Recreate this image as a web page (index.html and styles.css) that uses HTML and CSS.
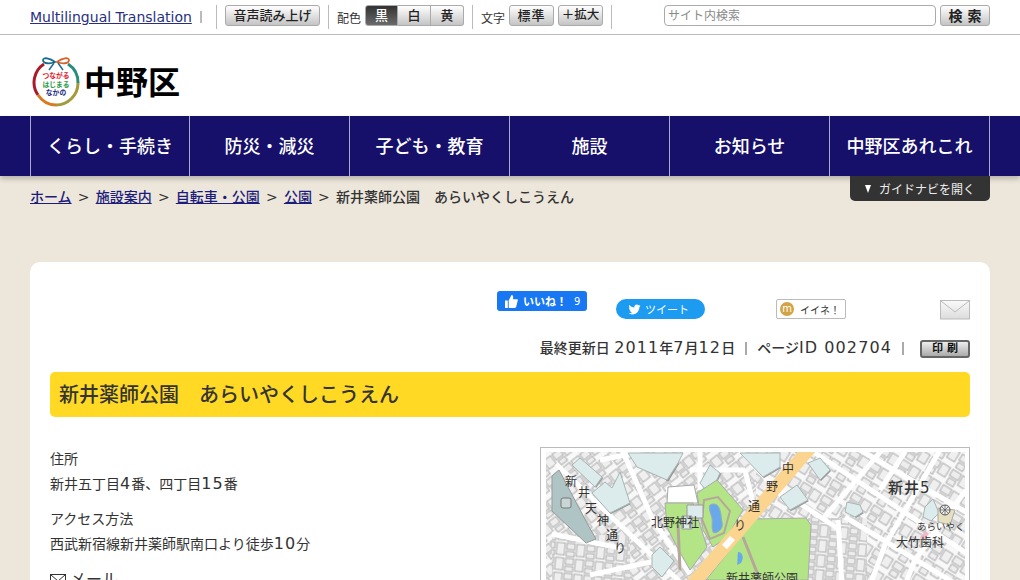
FILE: index.html
```html
<!DOCTYPE html>
<html lang="ja">
<head>
<meta charset="utf-8">
<title>新井薬師公園 中野区</title>
<link rel="stylesheet" href="styles.css">
</head>
<body>
<div class="topbar">
  <a class="lang" href="#">Multilingual Translation</a><span class="lang-sep"></span>
  <div class="tool tool-voice"><button class="btn btn-voice">音声読み上げ</button></div>
  <div class="tool tool-color"><span class="tool-label">配色</span>
    <div class="seg"><button class="seg-b on">黒</button><button class="seg-b">白</button><button class="seg-b">黄</button></div>
  </div>
  <div class="tool tool-size"><span class="tool-label">文字</span>
    <button class="btn btn-std">標準</button><button class="btn btn-big">＋拡大</button>
  </div>
  <div class="search"><input class="search-input" placeholder="サイト内検索"><button class="btn btn-search">検 索</button></div>
</div>
<header class="brand">
  <svg class="logo-mark" viewBox="0 0 48 50" width="48" height="50">
    <path d="M6 38A22 22 0 0 1 12 7" fill="none" stroke="#a81c2a" stroke-width="3"/>
    <path d="M6 38A22 22 0 0 0 24 48" fill="none" stroke="#d97a1e" stroke-width="3"/>
    <path d="M24 48A22 22 0 0 0 46 26" fill="none" stroke="#a59a3a" stroke-width="3"/>
    <path d="M46 26A22 22 0 0 0 36 7" fill="none" stroke="#2c8c7c" stroke-width="3"/>
    <path d="M23 5C18 1 11 0 11 3C11 7 18 7 23 5Z" fill="#fff" stroke="#156b8c" stroke-width="1.800"/>
    <path d="M25 5C30 1 37 0 37 3C37 7 30 7 25 5Z" fill="#fff" stroke="#d9612a" stroke-width="1.800"/>
    <path d="M22 6l-5 7M26 6l5 7" fill="none" stroke="#1d6f8c" stroke-width="1.500"/>
    <text class="logo-l" x="24" y="21" fill="#e0182d">つながる</text>
    <text class="logo-l" x="24" y="29.500" fill="#1f9a45">はじまる</text>
    <text class="logo-l" x="24" y="38" fill="#1b2a83">なかの</text>
  </svg>
  <span class="brand-name">中野区</span>
</header>
<nav class="gnav">
  <a class="gnav-i" href="#">くらし・手続き</a>
  <a class="gnav-i" href="#">防災・減災</a>
  <a class="gnav-i" href="#">子ども・教育</a>
  <a class="gnav-i" href="#">施設</a>
  <a class="gnav-i" href="#">お知らせ</a>
  <a class="gnav-i" href="#">中野区あれこれ</a>
</nav>
<div class="below-nav">
  <a class="guide" href="#"><span class="guide-arrow"></span>ガイドナビを開く</a>
  <div class="crumbs">
    <a href="#">ホーム</a><span class="crumb-sep">&gt;</span><a href="#">施設案内</a><span class="crumb-sep">&gt;</span><a href="#">自転車・公園</a><span class="crumb-sep">&gt;</span><a href="#">公園</a><span class="crumb-sep">&gt;</span><span>新井薬師公園　あらいやくしこうえん</span>
  </div>
</div>
<main class="card">
  <div class="share">
    <a class="fb" href="#"><svg viewBox="0 0 14 14" width="13" height="13"><path d="M0 6h3v8H0zM4 6l3-6c2 0 2 2 1.600 4.500H13c1 0 1 1.500.6 2L12 13c-.3.700-1 1-1.500 1H4z" fill="#fff"/></svg><b>いいね！</b><span class="fb-n">9</span></a>
    <a class="tw" href="#"><svg viewBox="0 0 24 24" width="13" height="13"><path d="M23 5c-.8.4-1.700.6-2.600.7.900-.6 1.600-1.400 2-2.500-.9.500-1.800.9-2.900 1.100a4.600 4.600 0 0 0-7.800 4.200C7.900 8.300 4.500 6.500 2.300 3.700c-1.200 2-.6 4.700 1.400 6.100-.7 0-1.400-.2-2-.6 0 2.200 1.500 4.100 3.700 4.600-.7.200-1.400.2-2.100.1.600 1.800 2.300 3.200 4.300 3.200A9.300 9.300 0 0 1 1 19c2 1.300 4.500 2 7 2 8.500 0 13.300-7.200 13-13.600.9-.6 1.600-1.400 2-2.400z" fill="#fff"/></svg>ツイート</a>
    <a class="mx" href="#"><span class="mx-ic">m</span>イイネ！</a>
    <a class="mail-ic" href="#"><svg viewBox="0 0 30 20" width="30" height="20"><defs><linearGradient id="mg" x1="0" y1="0" x2="0" y2="1"><stop offset="0" stop-color="#fafafa"/><stop offset="1" stop-color="#dcdcdc"/></linearGradient></defs><rect x=".5" y=".5" width="29" height="18.500" fill="url(#mg)" stroke="#bbb"/><path d="M1 1l14 11L29 1" fill="none" stroke="#bbb"/></svg></a>
  </div>
  <div class="meta">
    <span>最終更新日 <span class="num">2011</span>年<span class="num">7</span>月<span class="num">12</span>日</span><i class="meta-sep"></i><span>ページ<span class="num">ID 002704</span></span><i class="meta-sep"></i><button class="print">印 刷</button>
  </div>
  <h1 class="title">新井薬師公園　あらいやくしこうえん</h1>
  <div class="cols">
    <div class="info">
      <p class="info-l">住所</p>
      <p class="info-v">新井五丁目<span class="num">4</span>番、四丁目<span class="num">15</span>番</p>
      <p class="info-l">アクセス方法</p>
      <p class="info-v">西武新宿線新井薬師駅南口より徒歩<span class="num">10</span>分</p>
      <a class="info-mail" href="#"><svg viewBox="0 0 16 12" width="16" height="12"><rect x=".5" y=".5" width="15" height="11" fill="none" stroke="#333"/><path d="M1 1l7 6 7-6M1 11l5-5M15 11l-5-5" fill="none" stroke="#333"/></svg>メール</a>
    </div>
    <div class="map">
      <svg class="map-svg" viewBox="546 452 419 300" width="419" height="300">
        <defs>
          <pattern id="bA" width="24" height="18" patternUnits="userSpaceOnUse" patternTransform="rotate(32)">
            <rect width="24" height="18" fill="#f8f8f8"/>
            <rect x="1" y="1" width="10" height="7" fill="#ededed" stroke="#ababab"/>
            <rect x="13" y="1" width="9" height="11" fill="#efefef" stroke="#ababab"/>
            <rect x="2" y="10" width="8" height="6" fill="#ededed" stroke="#ababab"/>
          </pattern>
          <pattern id="bB" width="20" height="15" patternUnits="userSpaceOnUse" patternTransform="rotate(6)">
            <rect width="20" height="15" fill="#f8f8f8"/>
            <rect x="1" y="1" width="8" height="6" fill="#ededed" stroke="#ababab"/>
            <rect x="11" y="1" width="8" height="12" fill="#efefef" stroke="#ababab"/>
            <rect x="1" y="9" width="8" height="5" fill="#ededed" stroke="#ababab"/>
          </pattern>
          <pattern id="bC" width="22" height="17" patternUnits="userSpaceOnUse" patternTransform="rotate(-38)">
            <rect width="22" height="17" fill="#f8f8f8"/>
            <rect x="1" y="1" width="9" height="7" fill="#ededed" stroke="#ababab"/>
            <rect x="12" y="1" width="9" height="10" fill="#efefef" stroke="#ababab"/>
            <rect x="2" y="10" width="8" height="5" fill="#ededed" stroke="#ababab"/>
          </pattern>
        </defs>
        <rect x="546" y="452" width="210" height="300" fill="url(#bC)"/>
        <rect x="756" y="452" width="210" height="300" fill="url(#bA)"/>
        <rect x="552" y="535" width="78" height="50" fill="url(#bB)"/>
        <rect x="807" y="518" width="60" height="70" fill="url(#bB)"/>
        <g class="roads">
          <path d="M815 453L966 553M860 450L966 512M845 517L966 590M780 490L840 530"/>
          <path d="M882 450L822 520M940 450L885 545L870 585M966 490L915 560L905 585M838 520L842 585M905 452L880 490"/>
          <path d="M556 464L680 582M622 450L653 520L690 574M552 534L620 548M590 575L660 560M600 460L640 452M700 452L700 490"/>
          <path d="M740 450L790 505M690 470L745 470M745 470L756 515M666 490L694 490"/>
        </g>
        <path d="M668 487l26-2 4 18h-31z" fill="#fff" stroke="#aaa"/>
        <g class="shadow">
          <path d="M595 487l7-10M610 513l20-10M667 481l11-18M710 495l10-22M763 477l17-10M820 480l10-10M790 510l18-10M855 517l8-5"/>
        </g>
        <g fill="#dcecec" stroke="#a9b4b4" stroke-width="1">
          <path d="M572 465l8-7 22 19-7 10z"/>
          <path d="M592 493l13-11 7 6 8-16 10 31-20 10z"/>
          <path d="M628 453h55l-5 10-11 17-30-13z"/>
          <path d="M700 483l10-18 10 8-10 22z"/>
          <path d="M740 453h40v14l-17 10z"/>
          <path d="M808 463l12-5 10 12-10 10z"/>
          <path d="M780 497l17-12 11 15-18 10z"/>
          <path d="M847 502l13 3 3 7-8 5-10-5z"/>
          <path d="M652 555l8-8 14 14-12 16-10-10z"/>
          <path d="M925 507l8-8 6 14-8 8-8-4z"/>
        </g>
        <path d="M559 470l-7 6v35l34 32 10-4-8-14z" fill="#afc4c4" stroke="#999"/>
        <rect x="561" y="498" width="10" height="10" rx="2" fill="#c9d6d6" stroke="#777"/>
        <path d="M938 508l17 2-5 15-12-3z" fill="#e6e0c0" stroke="#aaa"/>
        <path d="M920 537l6-6 3 3-6 6z" fill="#f0b8c8"/>
        <g fill="#b3e586" stroke="#aaa">
          <path d="M697 493l20-13 26 30-16 27-14 10-10-17z"/>
          <path d="M665 503h28l14 44-17 23-13-23-10-20z"/>
          <path d="M755 519l51-1 5 7-3 55H706z"/>
        </g>
        <path d="M704 500l14-3 12 14-6 22-14 6-8-20z" fill="none" stroke="#b5a89a" stroke-width="2"/>
        <path d="M710 505c8-4 10 4 11 10 0 4 2 8 1 12-2 5-8 7-9 5-2-6 0-10-1-14s-4-10-2-13z" fill="#6aa8ec" stroke="#9ab"/>
        <path d="M678 525l2 45M743 537l17 43" stroke="#b5a89a" stroke-width="3" fill="none"/>
        <path d="M738 552c5 0 6 6 3 11l-4 2c1-4 0-8 1-13z" fill="#6aa8ec"/>
        <path d="M687 580L798 452h17L705 580z" fill="#fbd590"/>
        <path d="M722 545l8-9 5 4-8 9z" fill="#fff"/>
        <path d="M682 516h10v13h-10zM687 505h16v13h-16z" fill="#dcebec" stroke="#999"/>
        <g class="mtx">
          <text x="565" y="486">新</text><text x="578" y="497">井</text><text x="585" y="513">天</text><text x="597" y="525">神</text><text x="606" y="540">通</text><text x="614" y="553">り</text>
          <text x="651" y="527">北野神社</text>
          <text x="766" y="491">野</text><text x="748" y="511">通</text><text x="734" y="530">り</text><text x="782" y="473">中</text>
          <text x="726" y="583">新井薬師公園</text>
          <text class="mtx-sm" x="917" y="530">あらいやく</text><text x="896" y="547">大竹歯科</text>
        </g>
        <text class="mtx-big" x="888" y="493">新井5</text>
        <circle cx="945" cy="510" r="5" fill="#eee" stroke="#555"/>
        <path d="M940 510h10M945 505v10M941.500 506.500l7 7M948.500 506.500l-7 7" stroke="#555" stroke-width=".7"/>
      </svg>
    </div>
  </div>
</main>
</body>
</html>
```
FILE: styles.css
```css
* { box-sizing: border-box; }
html, body { margin: 0; padding: 0; height: 580px; overflow: hidden; }
body {
  width: 1020px;
  background: #ece6db;
  color: #333;
  font-family: "DejaVu Sans", "Noto Sans CJK JP", sans-serif;
  font-size: 14px;
}
button { font-family: inherit; padding: 0; cursor: pointer; }
a { color: #1b1c7c; }

.topbar {
  display: flex;
  align-items: center;
  height: 35px;
  padding: 0 0 0 30px;
  background: #fff;
  border-bottom: 1px solid #bbb;
}
.lang { font-size: 14px; width: 162px; white-space: nowrap; color: #27307f; }
.lang-sep { width: 2px; height: 12px; background: #bbb; margin-left: 8px; margin-right: 14px; }
.tool {
  display: flex;
  align-items: center;
  height: 24px;
  border-left: 1px solid #bbb;
}
.tool-voice { width: 112px; padding-left: 8px; }
.tool-color { width: 144px; padding-left: 8px; }
.tool-size { width: 140px; padding-left: 8px; border-right: 1px solid #bbb; }
.tool-label { font-size: 12px; margin-right: 4px; color: #333; white-space: nowrap; }
.btn {
  height: 21px;
  margin-top: -3px;
  border: 1px solid #aaa;
  border-radius: 3px;
  background: linear-gradient(#fff, #c4c4c4);
  color: #222;
  font-size: 13px;
  font-weight: 500;
  line-height: 1;
  white-space: nowrap;
}
.btn-voice { width: 95px; }
.btn-std { width: 45px; margin-right: 4px; letter-spacing: 1px; }
.btn-big { width: 45px; font-size: 12.500px; }
.seg { display: flex; margin-top: -3px; }
.seg-b {
  width: 33px;
  height: 21px;
  border: 1px solid #aaa;
  border-left-width: 0;
  background: linear-gradient(#fff, #c4c4c4);
  color: #222;
  font-size: 13px;
  font-weight: 500;
  line-height: 1;
}
.seg-b:last-child { border-radius: 0 3px 3px 0; }
.seg-b.on {
  border-left-width: 1px;
  border-radius: 3px 0 0 3px;
  background: linear-gradient(#333, #6a6a6a);
  color: #fff;
}
.search { display: flex; align-items: center; margin-left: 52px; }
.search-input {
  width: 272px;
  height: 21px;
  margin-top: -3px;
  padding: 0 3px;
  border: 1px solid #aaa;
  border-radius: 4px;
  font-family: inherit;
  font-size: 12px;
}
.search-input::placeholder { color: #8a8a8a; opacity: 1; }
.btn-search { width: 50px; margin-left: 4px; font-size: 14px; font-weight: 700; }

.brand {
  display: flex;
  align-items: center;
  height: 81px;
  padding: 21px 0 9px 32px;
  background: #fff;
}
.logo-mark { display: block; }
.logo-l { font-size: 6.800px; font-weight: 700; text-anchor: middle; font-family: "Noto Sans CJK JP", sans-serif; }
.brand-name { margin: 0 0 4px 4px; font-size: 32px; line-height: 1; font-weight: 700; color: #000; font-family: "Noto Sans CJK JP", sans-serif; }

.gnav {
  display: flex;
  height: 60px;
  padding-left: 30px;
  background: #16106b;
  box-shadow: 0 3px 5px rgba(0, 0, 0, .22);
  position: relative;
}
.gnav-i {
  display: flex;
  align-items: center;
  justify-content: center;
  width: 160px;
  padding-bottom: 3px;
  border-left: 1px solid #a9a9c8;
  color: #fff;
  font-size: 18px;
  font-weight: 500;
  text-decoration: none;
}
.gnav-i:first-child { width: 159px; }
.gnav-i:last-child { width: 161px; border-right: 1px solid #a9a9c8; }

.below-nav { position: relative; height: 86px; padding: 11px 0 0 30px; }
.guide {
  position: absolute;
  top: 0;
  left: 850px;
  display: flex;
  align-items: center;
  gap: 8px;
  width: 140px;
  height: 25px;
  padding-left: 15px;
  border-radius: 0 0 5px 5px;
  background: #333;
  color: #eee;
  font-size: 12px;
  text-decoration: none;
}
.guide-arrow { width: 0; height: 0; border: 3.500px solid transparent; border-top: 8px solid #fff; border-bottom: 0; }
.crumbs { font-size: 14px; line-height: 20px; font-weight: 500; white-space: nowrap; }
.crumb-sep { margin: 0 6.200px; }

.card {
  margin: 0 30px;
  height: 500px;
  padding: 0 20px;
  background: #fff;
  border-radius: 10px 10px 0 0;
}
.share { position: relative; height: 69px; }
.fb, .tw, .mx, .mail-ic { position: absolute; display: flex; align-items: center; text-decoration: none; }
.fb {
  left: 447px; top: 29px; width: 90px; height: 20px;
  padding-left: 8px;
  gap: 5px;
  border-radius: 3px;
  background: #1877f2;
  color: #fff;
  font-size: 11px;
}
.fb b { font-weight: 700; }
.fb-n { margin-left: 2px; font-size: 10px; }
.tw {
  left: 566px; top: 37px; width: 89px; height: 20px;
  padding-left: 12px;
  gap: 4px;
  border-radius: 10px;
  background: #1d9bf0;
  color: #fff;
  font-size: 11px;
}
.mx {
  left: 726px; top: 37px; width: 70px; height: 20px;
  padding-left: 3px;
  gap: 6px;
  border: 1px solid #bbb;
  border-radius: 2px;
  background: #fff;
  color: #333;
  font-size: 10px;
}
.mx-ic {
  width: 14px; height: 14px;
  border-radius: 50%;
  background: #d1a445;
  color: #fff;
  font-size: 10px;
  line-height: 13px;
  text-align: center;
}
.mail-ic { left: 890px; top: 38px; width: 30px; height: 20px; }

.meta {
  display: flex;
  align-items: center;
  justify-content: flex-end;
  height: 19px;
  margin-top: 8px;
  font-size: 14px;
  line-height: 19px;
  font-weight: 500;
  white-space: nowrap;
}
.num { font-size: 16px; letter-spacing: 1.100px; line-height: 1; font-weight: 400; }
.meta-sep { width: 2px; height: 13px; margin: 0 10px; background: #aaa; }
.print {
  width: 50px;
  height: 18px;
  margin-left: 6px;
  border: 2px solid #666;
  border-radius: 3px;
  background: linear-gradient(#eee, #aaa);
  color: #111;
  font-size: 11px;
  font-weight: 700;
  line-height: 1;
}
.title {
  margin: 14px 0 0;
  height: 45px;
  padding: 0 9px;
  border-radius: 5px;
  background: #ffd923;
  color: #333;
  font-size: 20px;
  font-weight: 500;
  line-height: 46px;
}
.cols { display: flex; justify-content: space-between; margin-top: 30px; }
.info { width: 440px; font-size: 14px; line-height: 25px; }
.info-l, .info-v { margin: 0; }
.info-v { margin-bottom: 10px; }
.info-mail { display: flex; align-items: center; gap: 4px; color: #333; font-size: 16px; line-height: 26px; text-decoration: none; margin-top: 8px; }
.map { width: 430px; height: 310px; padding: 4px 4px 0 5px; border: 1px solid #bbb; background: #fff; }
.map-svg { display: block; }
.roads path { fill: none; stroke: #fff; stroke-width: 5; }
.shadow path { fill: none; stroke: #9a9a9a; stroke-width: 3; }
.mtx text { font-size: 12px; fill: #333; font-family: "Noto Sans CJK JP", sans-serif; }
.mtx .mtx-sm { font-size: 9.500px; }
.mtx-big { font-size: 15px; font-weight: 500; letter-spacing: 1px; fill: #333; font-family: "DejaVu Sans", "Noto Sans CJK JP", sans-serif; }
```
